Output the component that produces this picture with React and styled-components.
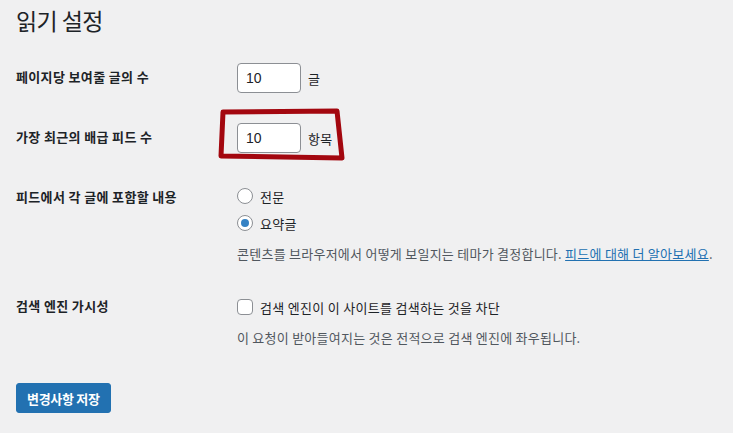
import React from 'react';
import styled, { createGlobalStyle } from 'styled-components';

const GlobalStyle = createGlobalStyle`
  html, body {
    margin: 0;
    padding: 0;
    background: #f0f0f1;
  }
  body {
    font-family: "Noto Sans CJK KR", "Noto Sans", sans-serif;
    color: #1d2327;
    font-size: 13px;
  }
`;

const Page = styled.div`
  position: relative;
  width: 733px;
  height: 433px;
  padding: 0 16px;
  box-sizing: border-box;
  overflow: hidden;
`;

const Title = styled.h1`
  margin: 0;
  padding-top: 5px;
  font-size: 23px;
  font-weight: 400;
  line-height: 30px;
  letter-spacing: -0.6px;
  height: 43px;
`;

const Row = styled.div`
  display: grid;
  grid-template-columns: 221px 1fr;
`;

const Label = styled.div`
  padding: 20px 0 0;
  font-size: 13px;
  font-weight: 700;
  line-height: 18px;
  letter-spacing: 0.35px;
`;

const Field = styled.div`
  padding: ${p => p.$pad || '15px 0'};
  display: flex;
  flex-direction: column;
`;

const Inline = styled.label`
  display: flex;
  align-items: center;
  gap: 7px;
  height: ${p => p.$h || 30}px;
  font-size: 13px;
  letter-spacing: 0.3px;
`;

const NumberBox = styled.input`
  width: 64px;
  height: 30px;
  box-sizing: border-box;
  border: 1px solid #8c8f94;
  border-radius: 4px;
  background: #fff;
  padding: 0 8px;
  font-family: "Liberation Sans", Arial, sans-serif;
  font-size: 14px;
  color: #1d2327;
  outline: none;
`;

const Radio = styled.span`
  width: 16px;
  height: 16px;
  box-sizing: border-box;
  border-radius: 50%;
  border: 1px solid #8c8f94;
  background: #fff;
  display: flex;
  align-items: center;
  justify-content: center;
  flex: none;
  &::after {
    content: '';
    width: 8px;
    height: 8px;
    border-radius: 50%;
    background: ${p => (p.$on ? '#3582c4' : 'transparent')};
  }
`;

const Box = styled.span`
  width: 16px;
  height: 16px;
  box-sizing: border-box;
  border-radius: 4px;
  border: 1px solid #8c8f94;
  background: #fff;
  flex: none;
`;

const Desc = styled.p`
  margin: ${p => p.$m || '0'};
  color: #50575e;
  font-size: 13px;
  line-height: 20px;
  letter-spacing: 0.25px;
  white-space: nowrap;
  a {
    color: #2271b1;
    text-decoration: underline;
  }
`;

const Footer = styled.div`
  padding-top: ${p => p.$top}px;
`;

const SaveButton = styled.button`
  height: 30px;
  padding: 0 10px;
  background: #2271b1;
  border: 1px solid #2271b1;
  border-radius: 3px;
  color: #fff;
  font-family: inherit;
  font-size: 13px;
  font-weight: 700;
  letter-spacing: -0.3px;
`;

const Mark = styled.svg`
  position: absolute;
  left: 0;
  top: 0;
  pointer-events: none;
`;

export default function App() {
  return (
    <>
      <GlobalStyle />
      <Page>
        <Title>읽기 설정</Title>

        <Row>
          <Label>페이지당 보여줄 글의 수</Label>
          <Field>
            <Inline>
              <NumberBox defaultValue="10" />글
            </Inline>
          </Field>
        </Row>

        <Row>
          <Label>가장 최근의 배급 피드 수</Label>
          <Field>
            <Inline>
              <NumberBox defaultValue="10" />항목
            </Inline>
          </Field>
        </Row>

        <Row>
          <Label>피드에서 각 글에 포함할 내용</Label>
          <Field $pad="15px 0 13px">
            <Inline $h={26}>
              <Radio />전문
            </Inline>
            <Inline $h={28}>
              <Radio $on />요약글
            </Inline>
            <Desc $m="7px 0 0">
              콘텐츠를 브라우저에서 어떻게 보일지는 테마가 결정합니다. <a href="#">피드에 대해 더 알아보세요</a>.
            </Desc>
          </Field>
        </Row>

        <Row>
          <Label>검색 엔진 가시성</Label>
          <Field $pad="15px 0">
            <Inline $h={30}>
              <Box />검색 엔진이 이 사이트를 검색하는 것을 차단
            </Inline>
            <Desc $m="6px 0 0">이 요청이 받아들여지는 것은 전적으로 검색 엔진에 좌우됩니다.</Desc>
          </Field>
        </Row>

        <Footer $top={20}>
          <SaveButton>변경사항 저장</SaveButton>
        </Footer>

        <Mark width="733" height="433">
          <polygon
            points="223,112 337,111 342,158 221,156"
            fill="none"
            stroke="#a3070f"
            strokeWidth="5"
            strokeLinejoin="round"
          />
        </Mark>
      </Page>
    </>
  );
}
